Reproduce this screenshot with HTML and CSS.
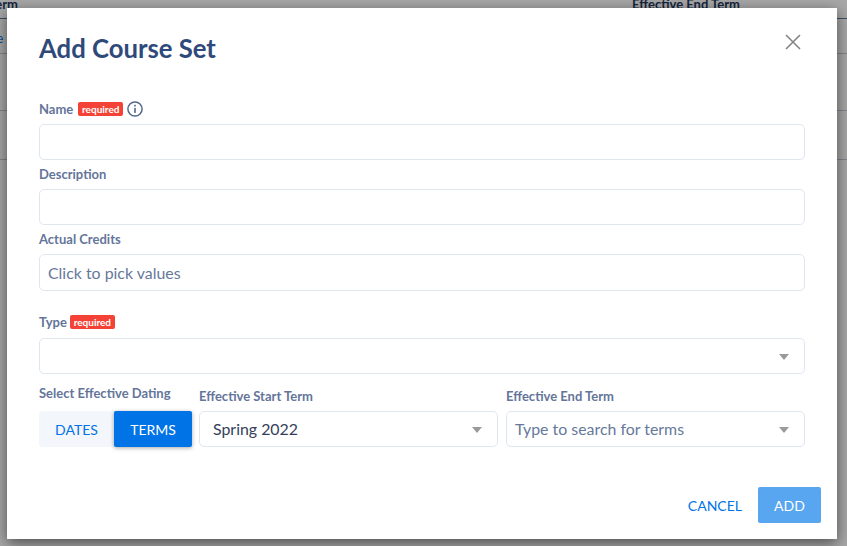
FILE: index.html
```html
<!DOCTYPE html>
<html lang="en">
<head>
<meta charset="utf-8">
<title>Add Course Set</title>
<link rel="stylesheet" href="styles.css">
</head>
<body>
<div class="page">
  <div class="bg-head"><span class="bg-left">Term</span><span class="bg-right">Effective End Term</span></div>
  <div class="bg-row bg-r1"><span class="bg-link">e</span></div>
  <div class="bg-row bg-r2"></div>
  <div class="bg-row bg-r3"></div>
</div>
<div class="overlay"></div>
<div class="modal">
  <header class="modal-head">
    <h1>Add Course Set</h1>
    <svg class="close" viewBox="0 0 16 16" width="16" height="16"><path d="M1 1L15 15M15 1L1 15" fill="none" stroke="#858585" stroke-width="1.6"/></svg>
  </header>
  <div class="field f-name">
    <div class="label-row"><label>Name</label><span class="req">required</span>
      <svg class="info" viewBox="0 0 16 16" width="16" height="16"><circle cx="8" cy="8" r="7.1" fill="none" stroke="#56678a" stroke-width="1.5"/><rect x="7.2" y="6.9" width="1.6" height="5" fill="#56678a"/><rect x="7.2" y="3.8" width="1.6" height="1.7" fill="#56678a"/></svg>
    </div>
    <div class="input"></div>
  </div>
  <div class="field">
    <div class="label-row"><label>Description</label></div>
    <div class="input"></div>
  </div>
  <div class="field">
    <div class="label-row"><label>Actual Credits</label></div>
    <div class="input tall"><span class="ph">Click to pick values</span></div>
  </div>
  <div class="field f-type">
    <div class="label-row"><label>Type</label><span class="req">required</span></div>
    <div class="input select"><span class="caret"></span></div>
  </div>
  <div class="dating">
    <div class="col col-toggle">
      <label class="lbl-dating">Select Effective Dating</label>
      <div class="toggle"><span class="tg-off">DATES</span><span class="tg-on">TERMS</span></div>
    </div>
    <div class="col col-term">
      <label>Effective Start Term</label>
      <div class="input select"><span class="val">Spring 2022</span><span class="caret"></span></div>
    </div>
    <div class="col col-term">
      <label>Effective End Term</label>
      <div class="input select"><span class="ph">Type to search for terms</span><span class="caret"></span></div>
    </div>
  </div>
  <footer class="actions">
    <span class="cancel">CANCEL</span>
    <span class="add">ADD</span>
  </footer>
</div>
</body>
</html>
```
FILE: styles.css
```css
* { box-sizing: border-box; }
html, body { margin: 0; height: 100%; }
body {
  width: 847px; height: 546px; overflow: hidden; position: relative;
  background: #fff; font-family: Lato, "Liberation Sans", sans-serif; color: #2f4a7a;
}
.page { height: 546px; overflow: hidden; }
.bg-head { height: 23px; margin-top: -4px; border-bottom: 1px solid #5f7a9a; display: flex; justify-content: space-between; padding: 0 107px 0 0; font-size: 13px; font-weight: 700; color: #23395f; line-height: 17px; }
.bg-left { margin-left: -11px; }
.bg-row { border-bottom: 1px solid #c4ccd8; }
.bg-r1 { height: 35px; color: #0073e6; font-size: 14px; padding-top: 10px; }
.bg-link { margin-left: -4px; }
.bg-r2 { height: 57px; }
.bg-r3 { height: 49px; }
.overlay { position: absolute; inset: 0; background: rgba(0,0,0,.34); }
.modal {
  position: absolute; left: 7px; top: 8px; width: 830px; height: 531px;
  background: #fff; padding: 0 32px; box-shadow: 0 4px 14px rgba(0,0,0,.55);
  display: flex; flex-direction: column;
}
.modal-head { height: 88px; display: flex; justify-content: space-between; align-items: flex-start; padding-right: 4px; }
h1 { margin: 21px 0 0; font-size: 25.7px; line-height: 38px; font-weight: 700; color: #2f4a7a; }
.close { margin-top: 26px; }
label { font-size: 13px; font-weight: 700; color: #64759a; line-height: 16px; display: block; }
.label-row { display: flex; align-items: center; height: 28px; padding-bottom: 2px; }
.req { margin-left: 5px; background: #f44336; color: #fff; font-size: 10px; font-weight: 700; line-height: 14px; height: 14px; padding: 0 3.75px; border-radius: 2px; }
.info { margin-left: 4px; }
.field { width: 766px; margin-bottom: 1px; }
.input { height: 36px; border: 1px solid #dfe6f0; border-radius: 5px; background: #fff; display: flex; align-items: center; padding: 0 8px; font-size: 15.9px; position: relative; }
.select { padding-bottom: 2px; }
.tall { height: 37px; }
.ph { color: #66789a; }
.val { color: #34405a; margin-left: 5px; }
.f-type { margin-top: 18px; }
.f-type .label-row { padding-bottom: 4px; }
.f-type .req { margin-left: 3px; }
.caret { position: absolute; right: 15px; top: 15px; width: 0; height: 0; border-left: 5px solid transparent; border-right: 5px solid transparent; border-top: 6px solid #9a9a9a; }
.dating { display: flex; width: 766px; margin-top: 9px; gap: 8px; }
.col { display: flex; flex-direction: column; }
.col label { height: 27px; padding-top: 4px; }
.col .lbl-dating { padding-top: 1px; }
.col-toggle { width: 153px; margin-right: -1px; }
.col-term { flex: 1; }
.toggle { display: flex; height: 36px; font-size: 14px; background: #f3f6fb; border-radius: 3px; }
.tg-off { width: 75px; color: #0073e6; display: flex; align-items: center; justify-content: center; }
.tg-on { width: 78px; background: #0073e6; color: #fff; border-radius: 2px; display: flex; align-items: center; justify-content: center; box-shadow: 0 1px 4px rgba(0,0,0,.35); }
.actions { margin-top: 40px; margin-right: -16px; display: flex; justify-content: flex-end; align-items: center; gap: 16px; font-size: 14px; }
.cancel { color: #0073e6; }
.add { width: 63px; height: 36px; background: #58a6f0; color: #fff; border-radius: 2px; display: flex; align-items: center; justify-content: center; }
```
